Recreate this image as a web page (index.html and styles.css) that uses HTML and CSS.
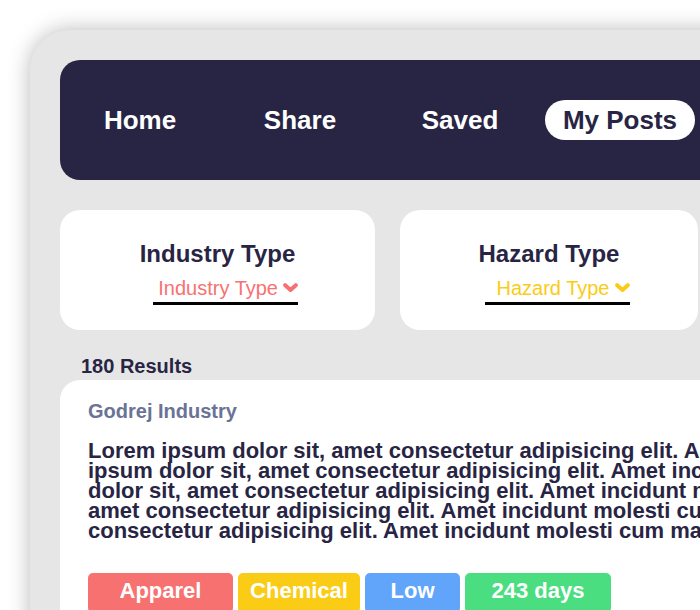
FILE: index.html
```html
<!DOCTYPE html>
<html lang="en">
<head>
<meta charset="utf-8">
<title>My Posts</title>
<link rel="stylesheet" href="styles.css">
</head>
<body>
<div class="page">
  <main class="panel">
    <nav class="nav">
      <a class="nav-item" href="#"><span class="nav-link">Home</span></a>
      <a class="nav-item" href="#"><span class="nav-link">Share</span></a>
      <a class="nav-item" href="#"><span class="nav-link">Saved</span></a>
      <a class="nav-item" href="#"><span class="nav-link nav-link--active">My Posts</span></a>
    </nav>

    <section class="filters">
      <div class="filter-card filter-card--wide">
        <div class="filter-title">Industry Type</div>
        <div class="select select--red">
          <span>Industry Type</span>
          <svg class="chevron" viewBox="0 0 15 10" width="15" height="10"><path d="M2.2 2.2 L7.5 7 L12.8 2.2" fill="none" stroke="currentColor" stroke-width="4" stroke-linecap="round" stroke-linejoin="round"/></svg>
        </div>
      </div>
      <div class="filter-card">
        <div class="filter-title">Hazard Type</div>
        <div class="select select--yellow">
          <span>Hazard Type</span>
          <svg class="chevron" viewBox="0 0 15 10" width="15" height="10"><path d="M2.2 2.2 L7.5 7 L12.8 2.2" fill="none" stroke="currentColor" stroke-width="4" stroke-linecap="round" stroke-linejoin="round"/></svg>
        </div>
      </div>
    </section>

    <div class="results">180 Results</div>

    <article class="post">
      <div class="post-company">Godrej Industry</div>
      <p class="post-text">Lorem ipsum dolor sit, amet consectetur adipisicing elit. Amet incidunt molesti cum magni. Lorem ipsum dolor sit, amet consectetur adipisicing elit. Amet incidunt molesti cum magni. Lorem ipsum dolor sit, amet consectetur adipisicing elit. Amet incidunt molesti cum magni. Lorem ipsum dolor sit, amet consectetur adipisicing elit. Amet incidunt molesti cum magni. Lorem ipsum dolor sit, amet consectetur adipisicing elit. Amet incidunt molesti cum magni.</p>
      <div class="tags">
        <span class="tag tag--red tag--apparel">Apparel</span>
        <span class="tag tag--yellow tag--chemical">Chemical</span>
        <span class="tag tag--blue tag--low">Low</span>
        <span class="tag tag--green tag--days">243 days</span>
      </div>
    </article>
  </main>
</div>
</body>
</html>
```

FILE: styles.css
```css
html, body {
  margin: 0;
  padding: 0;
  overflow: hidden;
  background: #ffffff;
}

body {
  font-family: "Liberation Sans", Arial, sans-serif;
  color: #282544;
}

.page {
  padding: 30px 0 0 30px;
  width: 1300px;
}

.panel {
  width: 1126px;
  padding: 30px;
  background: #e6e6e6;
  border-radius: 40px;
  box-shadow: 0 0 22px rgba(0, 0, 0, 0.28);
}

/* nav */
.nav {
  display: flex;
  align-items: center;
  height: 120px;
  background: #282544;
  border-radius: 20px;
}

.nav-item {
  width: 160px;
  display: flex;
  justify-content: center;
  text-decoration: none;
}

.nav-link {
  font-size: 26px;
  font-weight: bold;
  color: #ffffff;
  line-height: 40px;
  height: 40px;
  padding: 0 18px;
  border-radius: 20px;
}

.nav-link--active {
  background: #ffffff;
  color: #282544;
}

/* filters */
.filters {
  display: flex;
  gap: 25px;
  margin-top: 30px;
}

.filter-card {
  width: 298px;
  height: 120px;
  box-sizing: border-box;
  padding-top: 30px;
  background: #ffffff;
  border-radius: 20px;
  display: flex;
  flex-direction: column;
  align-items: center;
}

.filter-card--wide {
  width: 315px;
}

.filter-title {
  font-size: 24px;
  font-weight: bold;
  line-height: 28px;
  color: #282544;
}

.select {
  margin-top: 8px;
  margin-left: 16px;
  width: 145px;
  height: 26px;
  box-sizing: content-box;
  border-bottom: 3px solid #000000;
  display: flex;
  justify-content: flex-end;
  align-items: flex-start;
  gap: 5px;
  font-size: 20px;
  line-height: 24px;
}

.chevron {
  margin-top: 7px;
}

.select--red { color: #f87171; }
.select--yellow { color: #facc15; }

/* results */
.results {
  margin-top: 24px;
  padding-left: 21px;
  font-size: 20px;
  font-weight: bold;
  line-height: 24px;
  height: 26px;
  color: #282544;
}

/* post */
.post {
  background: #ffffff;
  border-radius: 20px;
  padding: 19px 28px 30px;
}

.post-company {
  font-size: 20px;
  font-weight: bold;
  line-height: 24px;
  color: #6a7396;
}

.post-text {
  margin: 18px 0 0;
  font-size: 22px;
  font-weight: bold;
  line-height: 20px;
  color: #282544;
}

.tags {
  display: flex;
  gap: 5px;
  margin-top: 32px;
}

.tag {
  display: block;
  height: 40px;
  line-height: 36px;
  border-radius: 5px;
  text-align: center;
  color: #ffffff;
  font-size: 22px;
  font-weight: bold;
}

.tag--red { background: #f87171; }
.tag--yellow { background: #facc15; }
.tag--blue { background: #60a5fa; }
.tag--green { background: #4ade80; }

.tag--apparel { width: 145px; }
.tag--chemical { width: 122px; }
.tag--low { width: 95px; }
.tag--days { width: 146px; }
```
